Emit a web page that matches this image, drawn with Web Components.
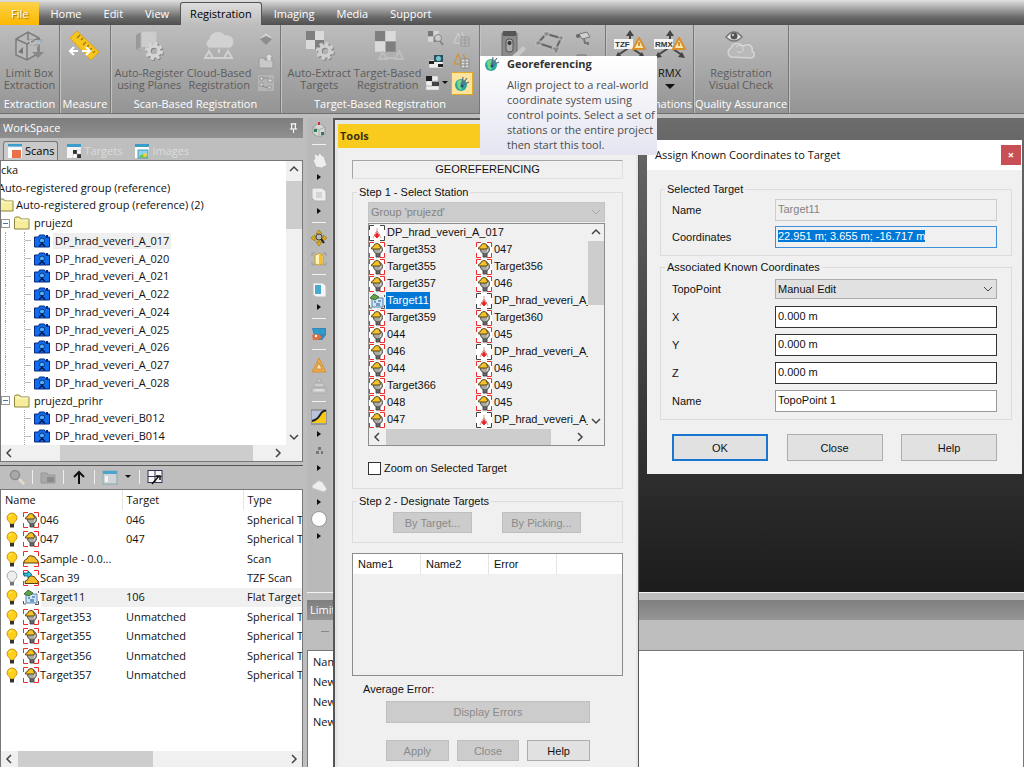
<!DOCTYPE html>
<html lang="en">
<head>
<meta charset="utf-8">
<title>Registration</title>
<style>
  html, body {
    height: 100%;
    margin: 0;
  }

  body {
    --ui: "Open Sans", "Noto Sans", sans-serif;
    --dlg: "Liberation Sans", Arial, sans-serif;
    --face: #f0f0f0;
    --chrome: #bebebe;
    font: 11px/14px var(--ui);
    color: #111;
    background: #bebebe;
    overflow: hidden;
  }
</style>
</head>
<body>

<app-shell>
  <ribbon-tabs slot="tabs"></ribbon-tabs>

  <ribbon-group slot="ribbon" label="Extraction" style="--w: 60px">
    <ribbon-button icon="limitbox" disabled>Limit Box<br>Extraction</ribbon-button>
  </ribbon-group>
  <ribbon-group slot="ribbon" label="Measure" style="--w: 51px">
    <ribbon-button icon="ruler"></ribbon-button>
  </ribbon-group>
  <ribbon-group slot="ribbon" label="Scan-Based Registration" style="--w: 170px">
    <ribbon-button icon="planes" disabled>Auto-Register<br>using Planes</ribbon-button>
    <ribbon-button icon="cloudreg" disabled>Cloud-Based<br>Registration</ribbon-button>
    <ribbon-stack icons="diamond,upload,points"></ribbon-stack>
  </ribbon-group>
  <ribbon-group slot="ribbon" label="Target-Based Registration" style="--w: 199px">
    <ribbon-button icon="checkgear" disabled>Auto-Extract<br>Targets</ribbon-button>
    <ribbon-button icon="checktri" disabled>Target-Based<br>Registration</ribbon-button>
    <ribbon-stack icons="checkfind,checkcam,checkmenu" menu="checkmenu"></ribbon-stack>
    <ribbon-stack icons="trilist,trilist2,globe" active="globe"></ribbon-stack>
  </ribbon-group>
  <ribbon-group slot="ribbon" label="" style="--w: 126px">
    <ribbon-button icon="station"></ribbon-button>
    <ribbon-button icon="polygon"></ribbon-button>
    <ribbon-stack icons="cam,sheet"></ribbon-stack>
  </ribbon-group>
  <ribbon-group slot="ribbon" label="Transformations" style="--w: 88px">
    <ribbon-button icon="tzf" dark>TZF</ribbon-button>
    <ribbon-button icon="rmx" dark menu>RMX</ribbon-button>
  </ribbon-group>
  <ribbon-group slot="ribbon" label="Quality Assurance" style="--w: 95px">
    <ribbon-button icon="eye" disabled>Registration<br>Visual Check</ribbon-button>
  </ribbon-group>

  <workspace-panel slot="left"></workspace-panel>
  <object-list slot="left"></object-list>
  <tool-strip slot="strip"></tool-strip>
  <limit-panel slot="bottom"></limit-panel>

  <tools-window slot="float"></tools-window>
  <coords-dialog slot="float" title-text="Assign Known Coordinates to Target"></coords-dialog>
  <tool-tip slot="float" heading="Georeferencing">Align project to a real-world coordinate system using control points. Select a set of stations or the entire project then start this tool.</tool-tip>
</app-shell>

<script>
const gear = (x, y, r, c) =>
  `<circle cx="${x}" cy="${y}" r="${r}" fill="none" stroke="${c}" stroke-width="${r * 0.7}"/>
   <circle cx="${x}" cy="${y}" r="${r * 1.5}" fill="none" stroke="${c}" stroke-width="${r * 0.6}" stroke-dasharray="${r * 0.65} ${r * 0.53}"/>`;

const corners = (c) =>
  `<path d="M.5 5V.5H5M11 .5h4.500V5M.5 11v4.500H5M15.500 11v4.500H11" fill="none" stroke="${c}" stroke-width="1"/>`;

const checks = (a, b) =>
  `<path d="M0 0h9v9H0zM9 9h9v9H9z" fill="${a}"/><path d="M9 0h9v9H9zM0 9h9v9H0z" fill="${b}"/>`;

const axes = (name) =>
  `<path d="M16 3v15M16 17L4 25M16 17l12 8" stroke="#444" stroke-width="2" fill="none"/>
   <path d="M16 0l-4 6h8zM1 28l3-6 4 5zM31 28l-3-6-4 5z" fill="#444"/>
   <rect x="0" y="9" width="19" height="10" fill="#f4f4f4"/>
   <text x="1" y="17" font-family="Liberation Sans" font-size="8" font-weight="bold" fill="#333">${name}</text>
   <path d="M25 8l6 11H19z" fill="#fbe7b0" stroke="#d9902c" stroke-width="2"/><path d="M25 12v4" stroke="#d9902c" stroke-width="2"/>`;

// each icon is [view box, markup]
const ICONS = {
  limitbox: ['0 0 32 32', `<path d="M3 9l12-7 11 6v15l-12 7-11-5zM3 9l11 5v16M14 14l12-6M15 2v8" fill="#b9b9b9" stroke="#7c7c7c" stroke-width="1.500"/>
    <text x="15" y="15" font-family="Liberation Sans" font-size="8" font-weight="bold" fill="#f2f2f2" stroke="#777" stroke-width=".3">TZF</text>
    <path d="M24 17v5h-5l6 6 6-6h-5v-5z" fill="#888"/><path d="M5 22l5-5v7z" fill="#777"/>`],
  ruler: ['0 0 32 32', `<path d="M8 1L1 8l21 22 8-8z" fill="#f7c51f" stroke="#e0a510"/><path d="M11 5l-3 3M14 8l-2 2M17 12l-3 3M20 15l-2 2M23 18l-3 3M26 21l-2 2" stroke="#9a7410" stroke-width="1.200"/>
    <path d="M1 21h8M5 17l-4 4 4 4M13 21h8M17 17l4 4-4 4" fill="none" stroke="#fff" stroke-width="2"/>`],
  planes: ['0 0 32 32', `<path d="M3 5l5-3v20l-5-3z" fill="#999"/><path d="M8 1h16v17H8z" fill="#ccc" stroke="#b5b5b5"/><path d="M4 19l4-2h14l3 4H7z" fill="#b0b0b0"/>${gear(22, 22, 5, '#868686')}${gear(21, 21, 5, '#d5d5d5')}`],
  cloudreg: ['0 0 32 32', `<path d="M6 18a5 5 0 0 1 0-9 9 9 0 0 1 16-4 7 7 0 0 1 5 13z" fill="#d2d2d2" stroke="#b8b8b8"/><path d="M6 21l4 7H2zM25 21l4 7h-8zM10 28h10M16 19v4" fill="none" stroke="#d0d0d0" stroke-width="2"/>`],
  checkgear: ['0 0 32 32', `<g transform="translate(3 1)">${checks('#7f7f7f', '#dadada')}</g>${gear(23, 22, 5, '#868686')}${gear(22, 21, 5, '#cfcfcf')}`],
  checktri: ['0 0 32 32', `<g transform="translate(3 1) scale(1.150)">${checks('#7f7f7f', '#dadada')}</g><path d="M11 22l4 7H7zM27 21l4 8h-8zM14 28h9" fill="none" stroke="#bebebe" stroke-width="2"/>`],
  station: ['0 0 32 32', `<path d="M8 3h15v24H8z" fill="#8a8a8a" stroke="#6f6f6f"/><path d="M9 1h13v5H9z" fill="#555"/><rect x="12" y="9" width="7" height="13" rx="3" fill="#aaa" stroke="#555"/><circle cx="15.500" cy="13" r="2" fill="#333"/><path d="M18 26l11-10 3 3-9 9z" fill="#c8c8c8"/>`],
  polygon: ['0 0 32 32', `<path d="M4 13L12 4l15 4-5 11z" fill="none" stroke="#666" stroke-width="2"/><path d="M10 2h5v4h-5zM2 11h5v4H2zM25 6h4v4h-4zM18 17h8l-4 8z" fill="#8a8a8a" stroke="#ccc" stroke-width=".7"/>`],
  tzf: ['0 0 32 32', axes('TZF')],
  rmx: ['0 0 32 32', axes('RMX')],
  eye: ['0 0 32 32', `<path d="M6 27a5 5 0 0 1 0-9 7 7 0 0 1 12-2c8-4 10 2 9 5 4 2 2 7-1 7z" fill="#b9b9b9" stroke="#d4d4d4" stroke-width="1.500"/><path d="M11 17c4-4 8 0 7 3s-5 3-6 1" fill="none" stroke="#ddd"/><path d="M1 7q8-10 16 0-8 8-16 0z" fill="#e5e5e5" stroke="#777" stroke-width="1.500"/><circle cx="9" cy="6" r="3.500" fill="#555"/><circle cx="8" cy="5" r="1" fill="#eee"/>`],
  diamond: ['0 0 16 16', `<path d="M8 2l6 5-6 5-6-5z" fill="#d0d0d0"/><path d="M2 8l6-3 6 3-6 6z" fill="#8d8d8d"/>`],
  upload: ['0 0 16 16', `<path d="M1 5h5l1 2h8v8H1z" fill="#c9c9c9" stroke="#9a9a9a"/><path d="M9 8V4H7l4-3 4 3h-2v4z" fill="#ddd" stroke="#999" stroke-width=".5"/>`],
  points: ['0 0 16 16', `<rect width="16" height="16" fill="#b4b4b4"/><path d="M2 2h3v3H2zM2 8h3v3H2zM10 4h4v3h-4zM10 11h3v3h-3z" fill="#ddd" stroke="#8d8d8d" stroke-width=".8"/><path d="M5 3h5M4 11l6 2" stroke="#8d8d8d"/>`],
  checkfind: ['0 0 16 16', `<g transform="scale(.600)">${checks('#777', '#d6d6d6')}</g><circle cx="10" cy="7" r="3.500" fill="#ccc" stroke="#888"/><path d="M12 10l3 4" stroke="#888" stroke-width="2"/>`],
  checkcam: ['0 0 16 16', `<path d="M1 7h14v8H1z" fill="#eee" stroke="#aaa" stroke-width=".6"/><path d="M1 8h5v3H1zM10 11h5v3h-5z" fill="#222"/><rect x="6" y="2" width="9" height="7" fill="#2b4f5c"/><circle cx="10.500" cy="5.500" r="2.500" fill="#7cc6d4"/>`],
  checkmenu: ['0 0 16 16', `<path d="M7 1h6v5H7zM1 6h6v5H1zM1 11h13v4H1z" fill="#eee" stroke="#aaa" stroke-width=".5"/><path d="M1 1h6v5H1z" fill="#222"/><path d="M7 7h7v4H7z" fill="#444"/>`],
  trilist: ['0 0 16 16', `<path d="M4 2l4 10H0zM8 1l3 8" fill="none" stroke="#d0d0d0"/><path d="M7 6h8v9H7z" fill="#bbb" stroke="#999"/><path d="M7 9h8M7 12h8M11 6v9" stroke="#999"/>`],
  trilist2: ['0 0 16 16', `<path d="M4 1l4 10H0zM9 1l4 7" fill="none" stroke="#c9954f" stroke-width="1.500"/><path d="M7 6h8v9H7z" fill="#ddd" stroke="#888"/><path d="M7 9h8M7 12h8M11 6v9" stroke="#888"/>`],
  globe: ['0 0 16 16', `<circle cx="7" cy="9" r="6" fill="#2ba6a0"/><path d="M3 6q3-4 5-1l-2 3 3 2-2 4Q3 13 3 6z" fill="#73d77f"/><path d="M8 9l5-7M9 9l6-3M8 8l1-7" stroke="#56718c" stroke-width="1.200"/><circle cx="8" cy="10" r="1.500" fill="#1c4b79"/>`],
  cam: ['0 0 16 16', `<path d="M4 3l8-2 3 5-8 2z" fill="#cfcfcf" stroke="#777"/><circle cx="3" cy="5" r="2" fill="#666"/><path d="M9 8l1 4h3v2" fill="none" stroke="#777" stroke-width="2"/>`],
  sheet: ['0 0 16 16', `<path d="M2 2h9v6H2z" fill="#aaa" stroke="#777"/><path d="M8 8h7v6H8z" fill="#ccc" stroke="#888"/>`],
  sphere: ['0 0 16 16', `<rect width="16" height="16" fill="#fff"/>${corners('#ee2c2c')}<path d="M7 11h4v4H7z" fill="#6b6b6b" stroke="#333" stroke-width=".8"/><circle cx="9" cy="7.500" r="4.500" fill="#a9a9a2" stroke="#4b4b4b"/><path d="M11.500 6q1 2-.5 4" stroke="#ddd" fill="none"/><path d="M2.500 7Q2 5 4.500 4.500 5 1.500 8 1.500q3 0 3 3 1 1 0 2.500z" fill="#f5c22c" stroke="#4a3a0c" stroke-width=".9"/>`],
  flat: ['0 0 16 16', `<path d="M3 5h11v9H3z" fill="#cfe6f4" stroke="#5a7fa5"/><path d="M5 8h2v2H5zM9 7h3v2H9zM7 10h4v3H7z" fill="#6f9cc4"/><path d="M1 5l4-4 5 3-4 3z" fill="#63a04a" stroke="#2d5a26" stroke-width=".8"/><path d="M15.500 12v3.500H12M15.500 4V2M.5 12v3H3" fill="none" stroke="#555"/>`],
  stationpt: ['0 0 16 16', `<rect width="16" height="16" fill="#fff"/>${corners('#444')}<path d="M8 3v4M7 7l-3 6M9 7l3 6" stroke="#c9a0a0" fill="none"/><path d="M8 6v7M5 10h6M8 8l2 3-2 2-2-2z" stroke="#e22" fill="#e22" stroke-width=".8"/>`],
  scan: ['0 0 16 16', `${corners('#ee2c2c')}<path d="M1 12q-1-3 3-4 1-4 5-3 3 0 4 3 3 1 2 4z" fill="#f5bd2c" stroke="#5b4309"/>`],
  tzfscan: ['0 0 16 16', `${corners('#ee2c2c')}<path d="M2 13.500q-1-3 3-4 0-4 4-3.500 3 0 4 3 3 2 2 4.500z" fill="#f5bd2c" stroke="#5b4309"/><path d="M1 3h4V1l4 3.500L5 8V6H1z" fill="#29c3e6" stroke="#15454f" stroke-width=".8"/>`],
  bulb: ['0 0 16 16', `<path d="M6 10.500Q3 8.500 3 6a5 5 0 0 1 10 0q0 2.500-3 4.500V12H6z" fill="#ffd11a" stroke="#b98600" stroke-width=".8"/><path d="M5 5q1-2 3-2" stroke="#fff3a8" fill="none"/><path d="M6 12h4v3.500H6z" fill="#34342c"/>`],
  bulboff: ['0 0 16 16', `<path d="M6 10.500Q3 8.500 3 6a5 5 0 0 1 10 0q0 2.500-3 4.500V12H6z" fill="#eee" stroke="#999" stroke-width=".8"/><path d="M6 12h4v3.500H6z" fill="#777"/>`],
  folder: ['0 0 16 16', `<path d="M.5 14V3.500l1-1.500h4l1.500 2h8v10z" fill="#f6ee9c" stroke="#8d8440"/><path d="M1.500 5h13" stroke="#fffbd5"/>`],
  camera: ['0 0 16 16', `<path d="M.5 4h4l1-2h5l1 2h4v10H.5z" fill="#0f6df2" stroke="#062a80"/><path d="M12 2h2v3h-2z" fill="#062a80"/><circle cx="8" cy="7.500" r="2.500" fill="#4db0ff" stroke="#031a4a" stroke-width=".8"/><path d="M8 9v2M5 13.500l3-3 3 3" stroke="#031a4a" stroke-width="1.500" fill="none"/>`],
  tabscan: ['0 0 16 16', `<rect x="1" y="1" width="14" height="14" fill="#fff"/><path d="M1 1h14v3H1z" fill="#3b9cc9"/><path d="M1 4h14" stroke="#d8ecf4"/><rect x="5" y="7" width="9" height="8" fill="#e8704a"/>`],
  tabtarget: ['0 0 16 16', `<rect x="1" y="1" width="14" height="14" fill="#f4f4f4"/><path d="M1 1h14v3H1z" fill="#3b9cc9"/><path d="M7 7h4v4H7zM11 11h4v4h-4z" fill="#333"/><path d="M11 7h4v4h-4zM7 11h4v4H7z" fill="#fff" stroke="#aaa" stroke-width=".4"/>`],
  tabimage: ['0 0 16 16', `<rect x="1" y="1" width="14" height="14" fill="#fff"/><path d="M1 1h14v3H1z" fill="#3b9cc9"/><rect x="4" y="7" width="10" height="8" fill="#8cd3ef" stroke="#4b99b8"/><path d="M4.500 14.500q4-6 9-2v2z" fill="#74bf3f"/><circle cx="11" cy="12" r="2" fill="#f3d34a"/>`],
  pin: ['0 0 12 12', `<path d="M3 1h6M4 1v5M8 1v5M2 6.500h8M6 7v4" fill="none" stroke="#fff" stroke-width="1.200"/>`],
  find: ['0 0 16 16', `<circle cx="6" cy="6" r="4.500" fill="#a9a9a9" stroke="#8c8c8c" stroke-width="1.500"/><path d="M10 10l5 5" stroke="#e4dcc8" stroke-width="3"/>`],
  group: ['0 0 16 16', `<path d="M1 4h6l1 2h7v8H1z" fill="#a8a8a8" stroke="#989898"/><rect x="7" y="8" width="7" height="5" fill="#8b8b8b"/>`],
  up: ['0 0 16 16', `<path d="M8 15V3M3 8l5-5 5 5" fill="none" stroke="#111" stroke-width="2"/>`],
  view: ['0 0 16 16', `<rect x="1" y="2" width="14" height="13" fill="#d0d4d6" stroke="#8aa"/><path d="M1 2h14v3H1z" fill="#49a5cc"/><path d="M3 7h3v6H3z" fill="#f4f4f4"/>`],
  layout: ['0 0 16 16', `<rect x="1" y="1.500" width="14" height="12" fill="#f6f6f6" stroke="#335"/><path d="M1 7.500h14M8 2v11" stroke="#335"/><path d="M5 15l7-8M9 7h4v4" stroke="#111" stroke-width="1.500" fill="none"/>`],
  cube: ['0 0 16 16', `<path d="M2 6l6-4 6 4v7l-6 3-6-3z" fill="#d7d7d7" stroke="#9d9d9d"/><path d="M2 6l6 3 6-3M8 9v7" fill="none" stroke="#aaa"/><path d="M3 8h3v3H3zM10 11h3v3h-3z" fill="#2f7d55"/><path d="M8 1v3" stroke="#c33" stroke-width="2"/>`],
  hand: ['0 0 16 16', `<path d="M5 15L2 8l2-1-1-4 2-1 2 2 1-3 2 1 1 2 2 0 1 4 2 5-5 3z" fill="#eee" stroke="#aaa" stroke-width=".7"/>`],
  box: ['0 0 16 16', `<path d="M1 2h10l4 3v10H4l-3-3z" fill="#ececec" stroke="#b0b0b0"/><path d="M5 6h6v6H5z" fill="#d4d4d4"/>`],
  move: ['0 0 16 16', `<path d="M8 1v14M1 8h14" stroke="#d6ab26" stroke-width="3"/><path d="M8 0l3 4H5zM8 16l3-4H5zM0 8l4-3v6zM16 8l-4-3v6z" fill="#e4b31c" stroke="#8a6a12" stroke-width=".6"/><circle cx="8" cy="7" r="3" fill="#bbb" stroke="#444"/><path d="M10 9l3 4" stroke="#222" stroke-width="2"/>`],
  cylinder: ['0 0 16 16', `<path d="M1 5V2h3M12 2h3v3M1 11v3h3M15 11v3h-3" stroke="#999" fill="none"/><path d="M4 4q4-3 8 0v9q-4 2-8 0z" fill="#fff3b6" stroke="#c79a1c"/><path d="M8 4h3v9H8z" fill="#f5bd2c"/>`],
  page: ['0 0 16 16', `<path d="M2 1h10l3 3v11H5l-3-2z" fill="#f6f6f6" stroke="#bbb"/><rect x="4" y="3" width="6" height="9" fill="#47a9ce"/>`],
  screen: ['0 0 16 16', `<path d="M1 2h14v7l-4 5H4z" fill="#3a85b8"/><path d="M3 3h11v5H3z" fill="#2f9bc9"/><path d="M1 9q4-2 8 0l2 3-4 2H2z" fill="#df6f45"/><circle cx="5" cy="10" r="1.200" fill="#fff"/>`],
  warn: ['0 0 16 16', `<path d="M8 1l7 14H1z" fill="#e9ab50" stroke="#d98f35"/><path d="M8 6l3 6H5z" fill="#f8e1ab" stroke="#b3701c" stroke-width=".6"/>`],
  stamp: ['0 0 16 16', `<path d="M6 1h4v3H6zM3 5h10v4H3zM1 10h14v5H1z" fill="#ccc" stroke="#aaa"/><path d="M4 12h8" stroke="#eee"/>`],
  ramp: ['0 0 16 16', `<rect x="0" y="1" width="15" height="14" fill="#b9c3dc" stroke="#777"/><path d="M1 13q5-1 8-6t6-5v12H1z" fill="#f8ca14"/><path d="M1 12q5-1 8-6t6-4" stroke="#222" stroke-width="2" fill="none"/>`],
  dots: ['0 0 16 16', `<path d="M7 4h3v3H7zM5 8h3v3H5zM10 8h2v3h-2z" fill="#777"/>`],
  cloud: ['0 0 16 16', `<path d="M1 11q0-4 4-5 1-3 4-2 4 1 4 4l3 4-3 3z" fill="#eee" stroke="#c6c6c6"/>`],
  ball: ['0 0 16 16', `<circle cx="8" cy="8" r="7.500" fill="#fff" stroke="#999"/>`],
  down: ['0 0 12 12', `<path d="M2 4l4 4 4-4" fill="none" stroke="currentColor" stroke-width="1"/>`]
};

class UiIcon extends HTMLElement {
  connectedCallback() {
    const [box, body] = ICONS[this.getAttribute('name')];
    this.attachShadow({mode: 'open'}).innerHTML = `
      <style>
        :host { display: block; flex: none; width: var(--size, 16px); height: var(--size, 16px); }
        svg { display: block; width: 100%; height: 100%; }
      </style>
      <svg viewBox="${box}" aria-hidden="true">${body}</svg>`;
  }
}

class ScrollBar extends HTMLElement {
  connectedCallback() {
    const vertical = this.hasAttribute('vertical');
    const [before, thumb, after] = this.getAttribute('parts').split(' ');
    const turn = vertical ? [180, 0] : [90, -90];
    this.attachShadow({mode: 'open'}).innerHTML = `
      <style>
        :host { display: flex; flex: none; flex-direction: ${vertical ? 'column' : 'row'}; background: #f0f0f0; color: #444;
          ${vertical ? 'width' : 'height'}: 16px; }
        svg { width: 16px; height: 16px; flex: none; }
        .track { flex: 1; display: flex; flex-direction: inherit; }
        .thumb { flex: ${thumb}; background: #cdcdcd; }
      </style>
      <svg viewBox="0 0 16 16" style="transform: rotate(${turn[0]}deg)"><path d="M4 6l4 4 4-4" fill="none" stroke="currentColor" stroke-width="1.500"/></svg>
      <div class="track"><i style="flex: ${before}"></i><i class="thumb"></i><i style="flex: ${after}"></i></div>
      <svg viewBox="0 0 16 16" style="transform: rotate(${turn[1]}deg)"><path d="M4 6l4 4 4-4" fill="none" stroke="currentColor" stroke-width="1.500"/></svg>`;
  }
}

class AppShell extends HTMLElement {
  connectedCallback() {
    this.attachShadow({mode: 'open'}).innerHTML = `
      <style>
        :host { display: flex; flex-direction: column; position: relative; height: 100%; overflow: hidden; background: var(--chrome); }
        .ribbon { display: flex; height: 88px; background: linear-gradient(#bdbdbd, #a8a8a8 50%, #949494); border-bottom: 1px solid #6f6f6f; overflow: hidden; flex: none; }
        .work { flex: 1; display: grid; grid-template-columns: 303px 1fr; min-height: 0; padding-top: 4px; }
        .left, .right { display: flex; flex-direction: column; min-width: 0; min-height: 0; }
        .top { flex: 1; display: flex; padding-left: 4px; min-height: 0; }
        .view { flex: 1; margin-left: 2px; border: solid #333; border-width: 0 0 0 1px; background: linear-gradient(#6c6c6c, #626262 10%, #333 68%, #1c1c1c); }
      </style>
      <slot name="tabs"></slot>
      <div class="ribbon"><slot name="ribbon"></slot></div>
      <div class="work">
        <div class="left"><slot name="left"></slot></div>
        <div class="right">
          <div class="top"><slot name="strip"></slot><div class="view"></div></div>
          <slot name="bottom"></slot>
        </div>
      </div>
      <slot name="float"></slot>`;
  }
}

class RibbonTabs extends HTMLElement {
  connectedCallback() {
    const tabs = ['File', 'Home', 'Edit', 'View', 'Registration', 'Imaging', 'Media', 'Support'];
    this.attachShadow({mode: 'open'}).innerHTML = `
      <style>
        :host { display: flex; align-items: flex-end; flex: none; height: 25px; background: linear-gradient(#e0e0e0, #a4a4a4 35%, #686868 70%, #505050); }
        button { box-sizing: border-box; height: 23px; margin: 0; padding: 0 11px; border: 0; background: none; color: #fff; font: inherit; }
        .file { background: linear-gradient(#fbd24a, #fbb800); text-shadow: 1px 1px 1px #a06c00; }
        .on { margin-right: 1px; padding: 0 9px; border: 1px solid #555; border-bottom: 0; border-radius: 3px 3px 0 0; background: linear-gradient(#ddd, #bdbdbd); color: #000; }
      </style>
      ${tabs.map(t => `<button class="${t === 'File' ? 'file' : t === 'Registration' ? 'on' : ''}">${t}</button>`).join('')}`;
  }
}

class RibbonGroup extends HTMLElement {
  connectedCallback() {
    this.attachShadow({mode: 'open'}).innerHTML = `
      <style>
        :host { box-sizing: border-box; display: flex; flex-direction: column; flex: none; width: var(--w); border-right: 1px solid #777; box-shadow: 1px 0 #c2c2c2; }
        .items { flex: 1; display: flex; justify-content: center; gap: 3px; min-height: 0; padding-top: 5px; }
        .label { flex: none; height: 18px; color: #fff; line-height: 18px; text-align: center; white-space: nowrap; }
      </style>
      <div class="items"><slot></slot></div>
      <div class="label">${this.getAttribute('label')}</div>`;
  }
}

class RibbonButton extends HTMLElement {
  connectedCallback() {
    const off = this.hasAttribute('disabled');
    this.attachShadow({mode: 'open'}).innerHTML = `
      <style>
        :host { display: block; color: ${off ? '#5c5c5c' : '#111'}; }
        button { display: flex; flex-direction: column; align-items: center; gap: 5px; min-width: 37px; padding: 0; border: 0; background: none; color: inherit; font: 11px/12px var(--ui); text-align: center; white-space: nowrap; }
        ui-icon { --size: 32px; }
        i { border: 5px solid transparent; border-top-color: #111; border-bottom: 0; }
      </style>
      <button ${off ? 'disabled' : ''} aria-label="${this.getAttribute('icon')}">
        <ui-icon name="${this.getAttribute('icon')}"></ui-icon>
        <span><slot></slot></span>
        ${this.hasAttribute('menu') ? '<i></i>' : ''}
      </button>`;
  }
}

class RibbonStack extends HTMLElement {
  connectedCallback() {
    const menu = this.getAttribute('menu');
    const active = this.getAttribute('active');
    this.attachShadow({mode: 'open'}).innerHTML = `
      <style>
        :host { display: flex; flex-direction: column; gap: 1px; margin-top: -2px; }
        button { display: flex; align-items: center; justify-content: center; gap: 1px; min-width: 22px; height: 21px; padding: 0; border: 0; background: none; }
        .active { height: 23px; border: 1px solid #e0a92e; background: #fde49a; }
        i { border: 3px solid transparent; border-top-color: #111; border-bottom: 0; }
      </style>
      ${this.getAttribute('icons').split(',').map(n => `
        <button class="${n === active ? 'active' : ''}" aria-label="${n}"><ui-icon name="${n}"></ui-icon>${n === menu ? '<i></i>' : ''}</button>`).join('')}`;
  }
}

class WorkspacePanel extends HTMLElement {
  connectedCallback() {
    const stations = (names, last = '') => names.map(n => `<li class="leaf ${last} ${n === 'A_017' ? 'on' : ''}"><ui-icon name="camera"></ui-icon><span>DP_hrad_veveri_${n}</span></li>`).join('');
    this.attachShadow({mode: 'open'}).innerHTML = `
      <style>
        :host { display: flex; flex-direction: column; flex: 1; min-height: 0; }
        header { display: flex; justify-content: space-between; align-items: center; height: 20px; padding: 0 4px 0 3px; background: linear-gradient(#7d7d7d, #909090); color: #fff; flex: none; }
        header ui-icon { --size: 11px; }
        nav { display: flex; align-items: flex-end; gap: 4px; height: 22px; padding-left: 3px; color: #dcdcdc; flex: none; }
        nav button { display: flex; align-items: center; gap: 2px; height: 19px; padding: 0 3px; border: 1px solid transparent; border-bottom: 0; background: none; color: inherit; font: inherit; }
        nav button.on { border-color: #777; border-radius: 3px 3px 0 0; background: #cacaca; color: #000; }
        .box { flex: 1; display: grid; grid-template: minmax(0, 1fr) 16px / minmax(0, 1fr) 16px; min-height: 0; border: 1px solid #777; background: #fff; }
        .corner { background: #f0f0f0; }
        ul { display: grid; grid-auto-rows: 1fr; margin: 0; padding: 0; list-style: none; overflow: hidden; white-space: nowrap; }
        li { display: flex; align-items: center; gap: 4px; min-height: 0; box-sizing: border-box; }
        li.cut { margin-left: -3px; gap: 2px; }
        li.leaf { gap: 3px; margin-left: 4px; padding-left: 18px; border-left: 1px dotted #aaa; }
        li.last { border-color: transparent; }
        li.leaf::before { content: ""; align-self: stretch; width: 6px; border-left: 1px dotted #aaa; background: linear-gradient(#bbb, #bbb) center / 100% 1px no-repeat; }
        li.leaf span { padding: 1px 2px; }
        li.on span { background: #efefef; }
        b { box-sizing: border-box; width: 9px; height: 9px; border: 1px solid #999; background: linear-gradient(#47a, #47a) center / 5px 1px no-repeat #fff; }
      </style>
      <header>WorkSpace<ui-icon name="pin"></ui-icon></header>
      <nav>
        <button class="on"><ui-icon name="tabscan"></ui-icon>Scans</button>
        <button><ui-icon name="tabtarget"></ui-icon>Targets</button>
        <button><ui-icon name="tabimage"></ui-icon>Images</button>
      </nav>
      <div class="box">
        <ul>
          <li>cka</li>
          <li class="cut">Auto-registered group (reference)</li>
          <li class="cut"><ui-icon name="folder"></ui-icon>Auto-registered group (reference) (2)</li>
          <li><b></b><ui-icon name="folder"></ui-icon>prujezd</li>
          ${stations(['A_017', 'A_020', 'A_021', 'A_022', 'A_024', 'A_025', 'A_026', 'A_027', 'A_028'])}
          <li><b></b><ui-icon name="folder"></ui-icon>prujezd_prihr</li>
          ${stations(['B012', 'B014'], 'last')}
        </ul>
        <scroll-bar vertical parts="4 48 198"></scroll-bar>
        <scroll-bar parts="42 191 17"></scroll-bar>
        <div class="corner"></div>
      </div>`;
  }
}

class ObjectList extends HTMLElement {
  connectedCallback() {
    const rows = [
      ['bulb', 'sphere', '046', '046', 'Spherical Target'],
      ['bulb', 'sphere', '047', '047', 'Spherical Target'],
      ['bulb', 'scan', 'Sample - 0.0...', '', 'Scan'],
      ['bulboff', 'tzfscan', 'Scan 39', '', 'TZF Scan'],
      ['bulb', 'flat', 'Target11', '106', 'Flat Target'],
      ['bulb', 'sphere', 'Target353', 'Unmatched', 'Spherical Target'],
      ['bulb', 'sphere', 'Target355', 'Unmatched', 'Spherical Target'],
      ['bulb', 'sphere', 'Target356', 'Unmatched', 'Spherical Target'],
      ['bulb', 'sphere', 'Target357', 'Unmatched', 'Spherical Target']
    ];
    this.attachShadow({mode: 'open'}).innerHTML = `
      <style>
        :host { display: flex; flex-direction: column; flex: none; height: 305px; }
        .bar { display: flex; align-items: center; gap: 7px; height: 21px; margin-top: 3px; padding: 0 0 2px 9px; border-top: 1px solid #555; }
        .bar hr { width: 1px; height: 14px; margin: 0; border: 0; background: #eee; }
        .bar i { margin-right: 1px; border: 3px solid transparent; border-top-color: #111; border-bottom: 0; }
        .box { flex: 1; display: flex; flex-direction: column; justify-content: space-between; min-height: 0; border: 1px solid #777; border-bottom: 0; background: #fff; overflow: hidden; }
        table { width: 360px; height: 195px; table-layout: fixed; border-collapse: collapse; white-space: nowrap; }
        th { height: 20px; padding: 0 4px; font-weight: normal; text-align: left; border-right: 1px solid #e5e5e5; }
        td { height: 19px; padding: 0 4px; }
        td:first-child { padding-left: 3px; }
        td:first-child div { display: flex; align-items: center; gap: 1px; }
        ui-icon[name^=bulb] { margin-right: 2px; }
        .on td:not(:first-child) { background: #f0f0f0; }
        .on td:first-child { background: linear-gradient(#f0f0f0, #f0f0f0) 40px 0 no-repeat; }
      </style>
      <div class="bar">
        <ui-icon name="find"></ui-icon><hr><ui-icon name="group"></ui-icon><hr><ui-icon name="up"></ui-icon><hr>
        <ui-icon name="view"></ui-icon><i></i><hr><ui-icon name="layout"></ui-icon>
      </div>
      <div class="box">
        <table>
          <colgroup><col style="width: 121px"><col style="width: 121px"><col></colgroup>
          <thead><tr><th>Name</th><th>Target</th><th>Type</th></tr></thead>
          <tbody>${rows.map(([bulb, icon, name, target, type]) => `
            <tr class="${name === 'Target11' ? 'on' : ''}">
              <td><div><ui-icon name="${bulb}"></ui-icon><ui-icon name="${icon}"></ui-icon>${name}</div></td><td>${target}</td><td>${type}</td>
            </tr>`).join('')}
          </tbody>
        </table>
        <scroll-bar parts="1 134 132"></scroll-bar>
      </div>`;
  }
}

class ToolStrip extends HTMLElement {
  connectedCallback() {
    const items = 'cube - hand > box > - move cylinder - page > - screen - warn stamp - ramp > dots > cloud > ball >'.split(' ');
    this.attachShadow({mode: 'open'}).innerHTML = `
      <style>
        :host { display: flex; flex-direction: column; width: 24px; flex: none; align-items: center; background: #b9b9b9; }
        div { display: grid; place-items: center; height: 21px; flex: none; }
        .line { height: 10px; }
        .line::before { content: ""; width: 14px; height: 1px; background: #f2f2f2; }
        .more { height: 13px; }
        .more::before { content: ""; border: 3px solid transparent; border-left: 4px solid #111; border-right: 0; }
      </style>
      ${items.map(n => n === '-' ? '<div class="line"></div>' : n === '>' ? '<div class="more"></div>' : `<div><ui-icon name="${n}"></ui-icon></div>`).join('')}`;
  }
}

class LimitPanel extends HTMLElement {
  connectedCallback() {
    this.attachShadow({mode: 'open'}).innerHTML = `
      <style>
        :host { display: flex; flex-direction: column; flex: none; height: 174px; margin-left: 4px; border-top: 1px solid #f4f4f4; }
        header { height: 20px; margin-top: 7px; padding: 0 3px; background: linear-gradient(#7f7f7f, #959595); color: #fff; line-height: 20px; }
        .bar { height: 30px; padding-left: 14px; display: flex; align-items: center; }
        .bar i { width: 8px; height: 1px; margin-bottom: 8px; background: #888; }
        ul { flex: 1; margin: 0; padding: 1px 5px; border: 1px solid #777; border-bottom: 0; background: #fff; list-style: none; line-height: 20px; }
      </style>
      <header>Limit</header>
      <div class="bar"><i></i></div>
      <ul><li>Name</li><li>New</li><li>New</li><li>New</li></ul>`;
  }
}

class GroupBox extends HTMLElement {
  connectedCallback() {
    this.attachShadow({mode: 'open'}).innerHTML = `
      <style>
        :host { display: block; font: 11px/14px var(--dlg); }
        fieldset { margin: 0; padding: 0; border: 1px solid #dcdcdc; min-width: 0; }
        legend { margin-left: 4px; padding: 0 2px; }
        div { padding: var(--pad, 0); }
      </style>
      <fieldset><legend>${this.getAttribute('legend')}</legend><div><slot></slot></div></fieldset>`;
  }
}

class DropDown extends HTMLElement {
  connectedCallback() {
    const off = this.hasAttribute('disabled');
    this.attachShadow({mode: 'open'}).innerHTML = `
      <style>
        :host { display: grid; align-items: center; height: 20px; color: ${off ? '#838383' : '#111'}; }
        select, ui-icon { grid-area: 1 / 1; }
        select { box-sizing: border-box; width: 100%; height: 100%; margin: 0; padding: 0 2px; appearance: none; border: 1px solid ${off ? '#c4c4c4' : '#adadad'}; border-radius: 0; background: ${off ? '#cccccc' : '#e1e1e1'}; color: inherit; font: 11px/14px var(--dlg); opacity: 1; }
        ui-icon { --size: 12px; justify-self: end; margin-right: 3px; color: ${off ? '#aaa' : '#444'}; pointer-events: none; }
      </style>
      <select aria-label="${this.getAttribute('label')}" ${off ? 'disabled' : ''}><option>${this.getAttribute('value')}</option></select>
      <ui-icon name="down"></ui-icon>`;
  }
}

class PushButton extends HTMLElement {
  connectedCallback() {
    const off = this.hasAttribute('disabled');
    const main = this.hasAttribute('default');
    this.attachShadow({mode: 'open'}).innerHTML = `
      <style>
        :host { display: block; height: 21px; }
        button { box-sizing: border-box; width: 100%; height: 100%; margin: 0; padding: 0; border: ${main ? '2px solid #1a75d0' : '1px solid #adadad'}; background: #e1e1e1; color: #111; font: 11px/14px var(--dlg); }
        button:disabled { border-color: #bfbfbf; background: #cccccc; color: #8a8a8a; }
      </style>
      <button ${off ? 'disabled' : ''}><slot></slot></button>`;
  }
}

class ToolsWindow extends HTMLElement {
  connectedCallback() {
    const entries = [
      ['DP_hrad_veveri_A_017', ''],
      ['Target353', '047'], ['Target355', 'Target356'], ['Target357', '046'],
      ['Target11', 'DP_hrad_veveri_A_'], ['Target359', 'Target360'], ['044', '045'],
      ['046', 'DP_hrad_veveri_A_'], ['044', '046'], ['Target366', '049'],
      ['048', '045'], ['047', 'DP_hrad_veveri_A_']
    ];
    const icon = (n) => n.startsWith('DP_') ? 'stationpt' : n === 'Target11' ? 'flat' : 'sphere';
    this.attachShadow({mode: 'open'}).innerHTML = `
      <style>
        :host { position: absolute; top: 118px; left: 333px; bottom: 0; box-sizing: border-box; width: 306px; padding: 4px 2px 0 3px; border: 2px solid #555; border-width: 2px 1px 0 2px; background: #e6e6e6; font: 11px/14px var(--dlg); overflow: hidden; }
        h2 { height: 24px; margin: 0; padding: 0 2px; background: #f8cb1c; font: bold 11px/24px var(--ui); color: #3c3210; }
        .body { height: 100%; padding: 12px 13px 0 14px; background: var(--face); }
        .name { height: 17px; border: 1px solid #b5b5b5; border-color: #a5a5a5 #e0e0e0 #e0e0e0 #a5a5a5; text-align: center; line-height: 17px; }
        .step1 { --pad: 3px 17px 13px 15px; margin-top: 6px; }
        .step2 { --pad: 4px 41px 9px 40px; margin-top: 5px; }
        .list { display: grid; grid-template: 205px 16px / minmax(0, 1fr) 16px; margin-top: 1px; border: 1px solid #8c8c8c; }
        ul { display: grid; grid-template-columns: 107px 1fr; grid-auto-rows: 17px; margin: 0; padding: 0; list-style: none; overflow: hidden; white-space: nowrap; }
        li { display: flex; align-items: center; gap: 1px; min-width: 0; }
        li span { padding: 1px 1px; line-height: 15px; }
        li.on span { background: #0078d7; color: #fff; }
        label { display: flex; align-items: center; gap: 3px; height: 14px; margin-top: 15px; }
        input { box-sizing: border-box; width: 13px; height: 13px; margin: 0; appearance: none; border: 1px solid #333; background: #fff; }
        .pair { display: flex; justify-content: space-between; }
        .pair push-button { width: 79px; }
        .errors { height: 121px; margin-top: 10px; border: 1px solid #8c8c8c; }
        table { width: 100%; border-collapse: collapse; table-layout: fixed; background: #fff; }
        th { width: 57px; height: 20px; padding: 0 5px; border-right: 1px solid #e5e5e5; font-weight: normal; text-align: left; }
        th:last-child { width: auto; border: 0; }
        p { margin: 6px 0 5px 11px; }
        .foot { display: grid; grid-template-columns: repeat(3, 1fr); gap: 17px 8px; padding: 0 33px 0 34px; }
        .foot .wide { grid-column: 1 / -1; height: 22px; }
      </style>
      <h2>Tools</h2>
      <div class="body">
        <div class="name">GEOREFERENCING</div>
        <group-box class="step1" legend="Step 1 - Select Station">
          <drop-down label="Station group" value="Group 'prujezd'" disabled></drop-down>
          <div class="list">
            <ul>${entries.flat().map(n => n ? `<li class="${n === 'Target11' ? 'on' : ''}"><ui-icon name="${icon(n)}"></ui-icon><span>${n}</span></li>` : '<li></li>').join('')}</ul>
            <scroll-bar vertical parts="1 64 108"></scroll-bar>
            <scroll-bar parts="1 164 21"></scroll-bar>
          </div>
          <label><input type="checkbox">Zoom on Selected Target</label>
        </group-box>
        <group-box class="step2" legend="Step 2 - Designate Targets">
          <div class="pair"><push-button disabled>By Target...</push-button><push-button disabled>By Picking...</push-button></div>
        </group-box>
        <div class="errors">
          <table><thead><tr><th>Name1</th><th>Name2</th><th>Error</th><th></th></tr></thead></table>
        </div>
        <p>Average Error:</p>
        <div class="foot">
          <push-button class="wide" disabled>Display Errors</push-button>
          <push-button disabled>Apply</push-button><push-button disabled>Close</push-button><push-button>Help</push-button>
        </div>
      </div>`;
  }
}

class FormRow extends HTMLElement {
  connectedCallback() {
    const kind = this.getAttribute('kind') || 'plain';
    this.attachShadow({mode: 'open'}).innerHTML = `
      <style>
        :host { display: grid; grid-template-columns: 103px 1fr; align-items: center; font: 11px/14px var(--dlg); }
        input { box-sizing: border-box; width: 100%; height: 22px; margin: 0; padding: 0 2px 2px; border: 1px solid #333; border-radius: 0; background: #fff; color: #111; font: 11px/14px var(--dlg); outline: 0; }
        .plain { border-color: #999; }
        .off { border-color: #ccc; background: #f0f0f0; color: #838383; }
        .picked { border-color: #3c8fd9; background: #f0f0f0; }
        .picked::selection { background: #0078d7; color: #fff; }
      </style>
      <label for="field">${this.getAttribute('label')}</label>
      <input id="field" class="${kind}" value="${this.getAttribute('value')}" ${kind === 'off' ? 'disabled' : ''}>`;
    if (kind === 'picked') {
      const field = this.shadowRoot.querySelector('input');
      field.focus();
      field.select();
    }
  }
}

class CoordsDialog extends HTMLElement {
  connectedCallback() {
    this.attachShadow({mode: 'open'}).innerHTML = `
      <style>
        :host { position: absolute; top: 140px; left: 647px; box-sizing: border-box; width: 375px; background: var(--face); font: 11px/14px var(--dlg); }
        header { display: flex; align-items: center; justify-content: space-between; height: 30px; padding: 0 1px 0 8px; background: #fff; font: 11px/14px var(--ui); }
        header button { width: 20px; height: 20px; padding: 0; border: 0; background: #c94f56; color: #fff; font: bold 11px/20px var(--ui); }
        .body { padding: 12px 10px 13px 13px; }
        .one { --pad: 3px 14px 7px 11px; }
        .two { --pad: 4px 14px 7px 11px; margin-top: 4px; }
        .rows { display: grid; gap: 6px; }
        .one .rows { gap: 5px; }
        .pick { display: grid; grid-template-columns: 103px 1fr; align-items: center; height: 22px; }
        .foot { display: flex; justify-content: space-between; padding: 14px 15px 0 12px; }
        .foot push-button { width: 96px; height: 27px; }
      </style>
      <header>${this.getAttribute('title-text')}<button aria-label="Close">×</button></header>
      <div class="body">
        <group-box class="one" legend="Selected Target">
          <div class="rows">
            <form-row label="Name" value="Target11" kind="off"></form-row>
            <form-row label="Coordinates" value="22.951 m; 3.655 m; -16.717 m" kind="picked"></form-row>
          </div>
        </group-box>
        <group-box class="two" legend="Associated Known Coordinates">
          <div class="rows">
            <div class="pick"><span>TopoPoint</span><drop-down label="TopoPoint" value="Manual Edit"></drop-down></div>
            <form-row label="X" value="0.000 m" kind="edit"></form-row>
            <form-row label="Y" value="0.000 m" kind="edit"></form-row>
            <form-row label="Z" value="0.000 m" kind="edit"></form-row>
            <form-row label="Name" value="TopoPoint 1"></form-row>
          </div>
        </group-box>
        <div class="foot"><push-button default>OK</push-button><push-button>Close</push-button><push-button>Help</push-button></div>
      </div>`;
  }
}

class ToolTip extends HTMLElement {
  connectedCallback() {
    this.attachShadow({mode: 'open'}).innerHTML = `
      <style>
        :host { position: absolute; top: 56px; left: 480px; box-sizing: border-box; width: 177px; display: grid; grid-template-columns: 16px 1fr; column-gap: 7px; padding: 0 0 3px 4px; background: linear-gradient(#fff, #e4e5f0); color: #4c4c4c; font: 11px/15px var(--ui); }
        b { color: #333; line-height: 16px; }
        p { grid-column: 2; margin: 5px 0 0; }
      </style>
      <ui-icon name="globe"></ui-icon><b>${this.getAttribute('heading')}</b>
      <p><slot></slot></p>`;
  }
}

customElements.define('ui-icon', UiIcon);
customElements.define('scroll-bar', ScrollBar);
customElements.define('app-shell', AppShell);
customElements.define('ribbon-tabs', RibbonTabs);
customElements.define('ribbon-group', RibbonGroup);
customElements.define('ribbon-button', RibbonButton);
customElements.define('ribbon-stack', RibbonStack);
customElements.define('workspace-panel', WorkspacePanel);
customElements.define('object-list', ObjectList);
customElements.define('tool-strip', ToolStrip);
customElements.define('limit-panel', LimitPanel);
customElements.define('group-box', GroupBox);
customElements.define('drop-down', DropDown);
customElements.define('push-button', PushButton);
customElements.define('tools-window', ToolsWindow);
customElements.define('form-row', FormRow);
customElements.define('coords-dialog', CoordsDialog);
customElements.define('tool-tip', ToolTip);
</script>
</body>
</html>
